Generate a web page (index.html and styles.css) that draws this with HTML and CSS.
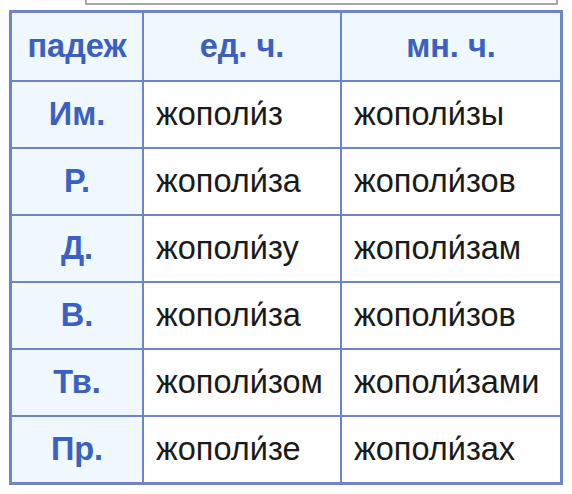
FILE: index.html
```html
<!DOCTYPE html>
<html lang="ru">
<head>
<meta charset="utf-8">
<link rel="stylesheet" href="styles.css">
</head>
<body>
<div class="above"></div>
<table class="decl">
  <tr class="head"><th class="h">падеж</th><th class="h c2">ед. ч.</th><th class="h c3">мн. ч.</th></tr>
  <tr><th>Им.</th><td>жополи́з</td><td>жополи́зы</td></tr>
  <tr><th>Р.</th><td>жополи́за</td><td>жополи́зов</td></tr>
  <tr><th>Д.</th><td>жополи́зу</td><td>жополи́зам</td></tr>
  <tr><th>В.</th><td>жополи́за</td><td>жополи́зов</td></tr>
  <tr><th>Тв.</th><td>жополи́зом</td><td>жополи́зами</td></tr>
  <tr><th>Пр.</th><td>жополи́зе</td><td>жополи́зах</td></tr>
</table>
</body>
</html>
```
FILE: styles.css
```css
html, body {
  margin: 0;
  background: #ffffff;
}
body {
  font-family: "Liberation Sans", Arial, sans-serif;
}
.above {
  margin-left: 85px;
  width: 469px;
  height: 3px;
  border: 2px solid #a7a7a7;
  border-top: none;
  background: #fff;
}
.decl {
  margin-top: 5px;
  margin-left: 9px;
  border-collapse: collapse;
  border: 3px solid #6f86c4;
  font-size: 32.5px;
}
.decl th, .decl td {
  border: 2px solid #6f86c4;
  height: 65px;
  padding: 0 12px;
}
.decl .head th {
  height: 67px;
}
.decl th {
  background: #eff7ff;
  color: #3a60c2;
  font-weight: bold;
  text-align: center;
  width: 106px;
}
.decl th.c2 { width: 172px; }
.decl th.c3 { width: 194px; }
.decl td {
  background: #ffffff;
  color: #1a1a1a;
  text-align: left;
}
```
